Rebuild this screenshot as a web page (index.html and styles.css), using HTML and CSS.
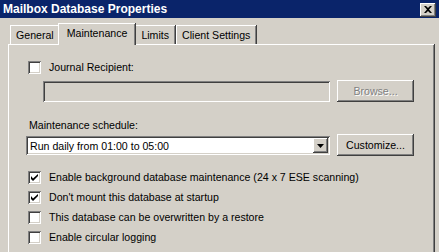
FILE: index.html
```html
<!doctype html>
<html lang="en">
	<head>
	<meta charset="utf-8">
	<title>Mailbox Database Properties</title>
	<link rel="stylesheet" href="styles.css">
	</head>
	<body>

		<div class="window">
			<div class="titlebar">
				<span class="title">Mailbox Database Properties</span>
				<span class="close-btn">
					<svg width="8" height="7" viewBox="0 0 8 7"><path d="M0 0h2l2 2 2-2h2L5 3.5 8 7H6L4 5 2 7H0l3-3.5z" fill="#000"/></svg>
				</span>
			</div>

			<div class="tabs">
				<div class="tab">General</div>
				<div class="tab tab-active">Maintenance</div>
				<div class="tab">Limits</div>
				<div class="tab">Client Settings</div>
			</div>

			<div class="panel">
				<label class="check-row">
					<span class="checkbox"></span>
					<span>Journal Recipient:</span>
				</label>

				<div class="field-row journal-row">
					<div class="textbox"></div>
					<div class="button is-disabled">Browse...</div>
				</div>

				<div class="label">Maintenance schedule:</div>

				<div class="field-row schedule-row">
					<div class="select">
						<span class="select-value">Run daily from 01:00 to 05:00</span>
						<span class="select-arrow">
							<svg width="7" height="4" viewBox="0 0 7 4"><path d="M0 0h7L3.5 4z" fill="#000"/></svg>
						</span>
					</div>
					<div class="button">Customize...</div>
				</div>

				<div class="checks">
					<label class="check-row">
						<span class="checkbox"><svg width="7" height="7" viewBox="0 0 7 7"><path d="M0 2v3l2 2 5-5V0L2 4.6z" fill="#000"/></svg></span>
						<span>Enable background database maintenance (24 x 7 ESE scanning)</span>
					</label>
					<label class="check-row">
						<span class="checkbox"><svg width="7" height="7" viewBox="0 0 7 7"><path d="M0 2v3l2 2 5-5V0L2 4.6z" fill="#000"/></svg></span>
						<span>Don't mount this database at startup</span>
					</label>
					<label class="check-row">
						<span class="checkbox"></span>
						<span>This database can be overwritten by a restore</span>
					</label>
					<label class="check-row">
						<span class="checkbox"></span>
						<span>Enable circular logging</span>
					</label>
				</div>
			</div>
		</div>

	</body>
</html>
```

FILE: styles.css
```css
body {
	margin: 0;
	background: #d4d0c8;
	font-family: "Liberation Sans", Arial, sans-serif;
	font-size: 10.6px;
	color: #000;
	overflow: hidden;
}

.window {
	width: 439px;
	height: 252px;
}

/* title bar */
.titlebar {
	display: flex;
	align-items: center;
	justify-content: space-between;
	height: 18px;
	padding: 0 3px;
	background: #0a246a;
}

.title {
	color: #fff;
	font-weight: bold;
	font-size: 12px;
}

.close-btn {
	display: flex;
	align-items: center;
	justify-content: center;
	width: 16px;
	height: 14px;
	margin-top: 1px;
	background: #d4d0c8;
	box-shadow: inset -1px -1px #404040, inset 1px 1px #fff, inset -2px -2px #808080;
}

/* tabs */
.tabs {
	display: flex;
	align-items: flex-end;
	height: 21px;
	margin-top: 5px;
	padding-left: 10px;
	position: relative;
	z-index: 1;
}

.tab {
	height: 18px;
	line-height: 18px;
	padding: 0 6px 0 5px;
	border-top: 1px solid #fff;
	border-left: 1px solid #fff;
	box-shadow: inset -1px 0 #808080, 1px 0 #404040;
	margin-right: 1px;
}

.tab-active {
	height: 21px;
	line-height: 18px;
	padding: 0 8px;
	margin: 0 0 0 -3px;
	background: #d4d0c8;
	position: relative;
	top: 1px;
}

/* panel */
.panel {
	box-sizing: border-box;
	height: 208px;
	margin: 0 5px 0 8px;
	padding: 15px 19px 0 19px;
	border-top: 1px solid #fff;
	border-left: 1px solid #fff;
	box-shadow: inset -1px 0 #808080, 1px 0 #404040;
}

.check-row {
	display: flex;
	align-items: center;
	gap: 8px;
	height: 14px;
}

.checkbox {
	display: flex;
	align-items: center;
	justify-content: center;
	flex: none;
	width: 13px;
	height: 13px;
	box-sizing: border-box;
	background: #fff;
	box-shadow: inset 1px 1px #808080, inset -1px -1px #fff, inset 2px 2px #404040, inset -2px -2px #d4d0c8;
}

.field-row {
	display: flex;
	align-items: center;
}

.journal-row {
	margin: 6px 0 0 15px;
	height: 22px;
}

.textbox {
	width: 287px;
	height: 21px;
	box-sizing: border-box;
	box-shadow: inset 1px 1px #808080, inset -1px -1px #fff, inset 2px 2px #404040, inset -2px -2px #d4d0c8;
}

.button {
	display: flex;
	align-items: center;
	justify-content: center;
	width: 77px;
	height: 22px;
	margin-left: 7px;
	box-shadow: inset -1px -1px #404040, inset 1px 1px #fff, inset -2px -2px #808080;
}

.is-disabled {
	color: #808080;
	text-shadow: 1px 1px #fff;
}

.label {
	margin-top: 17px;
	padding-left: 1px;
	height: 13px;
}

.schedule-row {
	margin-top: 2px;
	margin-left: -2px;
	height: 22px;
}

.select {
	display: flex;
	align-items: center;
	justify-content: space-between;
	width: 304px;
	height: 19px;
	box-sizing: border-box;
	padding: 2px;
	margin-top: 1px;
	background: #fff;
	box-shadow: inset 1px 1px #808080, inset -1px -1px #fff, inset 2px 2px #404040, inset -2px -2px #d4d0c8;
}

.select-value {
	padding-left: 2px;
}

.select-arrow {
	display: flex;
	align-items: center;
	justify-content: center;
	width: 15px;
	height: 15px;
	background: #d4d0c8;
	box-shadow: inset -1px -1px #404040, inset 1px 1px #fff, inset -2px -2px #808080;
}

.checks {
	display: flex;
	flex-direction: column;
	gap: 6px;
	margin-top: 14px;
}
```
